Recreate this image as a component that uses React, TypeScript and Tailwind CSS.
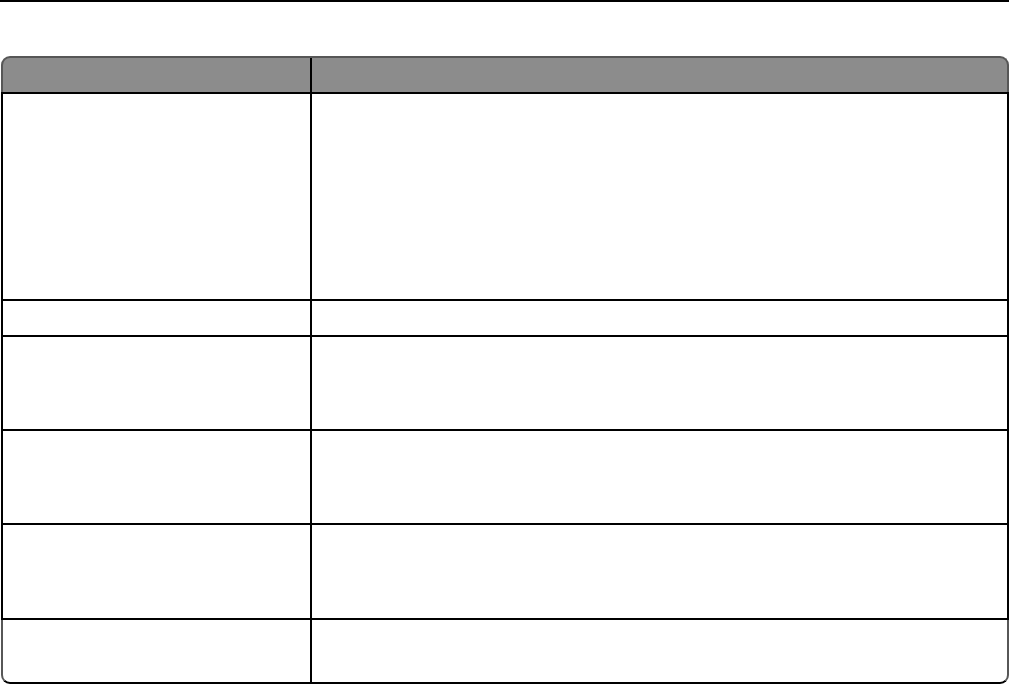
const rows = [
  { h: "h-[207px]" },
  { h: "h-[36px]" },
  { h: "h-[94px]" },
  { h: "h-[94px]" },
  { h: "h-[95px]" },
];

export default function App() {
  return (
    <div className="w-[1010px] h-[685px] bg-white overflow-hidden font-['Liberation_Sans',sans-serif]">
      <div className="h-[2px] w-[1009px] bg-black" />

      <div className="mt-[54px] ml-[1px] w-[1008px]">
        {/* header */}
        <div className="flex h-[38px] bg-[#8c8c8c] rounded-t-[9px] border-t-2 border-x-2 border-[#575757]">
          <div className="w-[309px] shrink-0 border-r-2 border-black" />
          <div className="flex-1" />
        </div>
        <div className="h-0 border-b-2 border-black -mt-[2px]" />

        {/* body */}
        {rows.map((r, i) => (
          <div key={i} className={`flex ${r.h} border-x-2 border-b-2 border-black`}>
            <div className="w-[309px] shrink-0 border-r-2 border-black" />
            <div className="flex-1" />
          </div>
        ))}
        <div className="flex h-[64px] border-x-2 border-b-2 border-x-[#575757] border-b-black rounded-b-[9px]">
          <div className="w-[309px] shrink-0 border-r-2 border-black" />
          <div className="flex-1" />
        </div>
      </div>
    </div>
  );
}
